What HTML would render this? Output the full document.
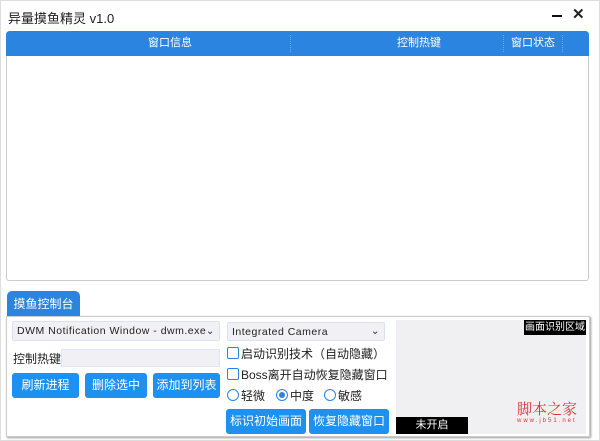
<!DOCTYPE html>
<html><head><meta charset="utf-8"><style>
*{margin:0;padding:0;box-sizing:border-box}
body{width:600px;height:441px;background:#fff;font-family:"Liberation Sans","Noto Sans CJK SC",sans-serif;font-size:12px;color:#222;position:relative;overflow:hidden}
.a{position:absolute;white-space:nowrap}
.btn{position:absolute;background:#1e90f0;color:#fff;border-radius:3px;text-align:center;font-size:12px;white-space:nowrap}
.sel{position:absolute;background:#f1f1f5;border:1px solid #d8e4f4;border-radius:2px;font-size:11px;padding-left:4px;line-height:18px;letter-spacing:0.5px;white-space:nowrap;overflow:hidden}
.cb{position:absolute;width:12px;height:12px;border:1px solid #2a84e0;border-radius:2px;background:#fff}
.rd{position:absolute;width:12px;height:12px;border:1px solid #2a84e0;border-radius:50%;background:#fff}
</style></head><body>
<div class="a" style="left:0;top:0;width:600px;height:441px;border:1px solid #ddd"></div>
<div class="a" style="left:8px;top:8px;font-size:13px">异量摸鱼精灵 v1.0</div>
<div class="a" style="left:552px;top:15px;width:10px;height:2px;background:#111"></div>
<div class="a" style="left:572px;top:5px;font-size:15px;font-weight:bold">✕</div>
<div class="a" style="left:6px;top:31px;width:583px;height:250px;border:1px solid #ccc;border-radius:3px;background:#fff"></div>
<div class="a" style="left:6px;top:31px;width:583px;height:25px;background:#2a84e0;border-radius:4px 4px 0 0;color:#fff;font-size:11px;line-height:25px">
<span class="a" style="left:142px">窗口信息</span>
<span class="a" style="left:284px;top:4px;height:17px;border-left:1px dotted #6aa8ea"></span>
<span class="a" style="left:391px">控制热键</span>
<span class="a" style="left:497px;top:4px;height:17px;border-left:1px dotted #6aa8ea"></span>
<span class="a" style="left:505px">窗口状态</span>
<span class="a" style="left:556px;top:4px;height:17px;border-left:1px dotted #6aa8ea"></span>
</div>
<div class="a" style="left:7px;top:291px;width:73px;height:26px;background:#2a84e0;border-radius:5px 5px 0 0;color:#fff;font-size:12px;line-height:26px;text-align:center">摸鱼控制台</div>
<div class="a" style="left:6px;top:316px;width:584px;height:121px;border:1px solid #ccc;box-shadow:1px 1px 2px #999;background:#fff"></div>
<div class="sel" style="left:12px;top:321px;width:208px;height:20px;font-size:10.5px">DWM Notification Window - dwm.exe<span class="a" style="right:4px;top:0;color:#335">⌄</span></div>
<div class="sel" style="left:227px;top:322px;width:158px;height:19px;font-size:10.5px">Integrated Camera<span class="a" style="right:4px;top:-1px;color:#335">⌄</span></div>
<div class="a" style="left:13px;top:350px">控制热键</div>
<div class="a" style="left:61px;top:349px;width:159px;height:18px;background:#f1f1f5;border:1px solid #dce6f4"></div>
<div class="btn" style="left:12px;top:373px;width:67px;height:25px;line-height:25px">刷新进程</div>
<div class="btn" style="left:85px;top:373px;width:62px;height:25px;line-height:25px">删除选中</div>
<div class="btn" style="left:153px;top:373px;width:67px;height:25px;line-height:25px">添加到列表</div>
<div class="cb" style="left:227px;top:347px"></div><div class="a" style="left:241px;top:345px">启动识别技术（自动隐藏）</div>
<div class="cb" style="left:227px;top:368px"></div><div class="a" style="left:241px;top:366px">Boss离开自动恢复隐藏窗口</div>
<div class="rd" style="left:227px;top:389px"></div><div class="a" style="left:241px;top:387px">轻微</div>
<div class="rd" style="left:276px;top:389px"></div><div class="a" style="left:279px;top:392px;width:6px;height:6px;border-radius:50%;background:#2a84e0"></div><div class="a" style="left:290px;top:387px">中度</div>
<div class="rd" style="left:324px;top:389px"></div><div class="a" style="left:338px;top:387px">敏感</div>
<div class="btn" style="left:226px;top:409px;width:80px;height:25px;line-height:25px">标识初始画面</div>
<div class="btn" style="left:309px;top:409px;width:80px;height:25px;line-height:25px">恢复隐藏窗口</div>
<div class="a" style="left:396px;top:320px;width:190px;height:114px;background:#f0f0f3"></div>
<div class="a" style="left:524px;top:320px;width:62px;height:15px;background:#000;color:#fff;font-size:10px;line-height:15px;text-align:center">画面识别区域</div>
<div class="a" style="left:396px;top:417px;width:72px;height:17px;background:#000;color:#fff;font-size:11px;line-height:17px;text-align:center">未开启</div>
<div class="a" style="left:517px;top:398px;color:#d33;font-size:15px;font-family:'Noto Serif CJK SC',serif">脚本之家</div>
<div class="a" style="left:517px;top:418px;color:#d33;font-size:6px;letter-spacing:2px">www.jb51.net</div>
</body></html>
